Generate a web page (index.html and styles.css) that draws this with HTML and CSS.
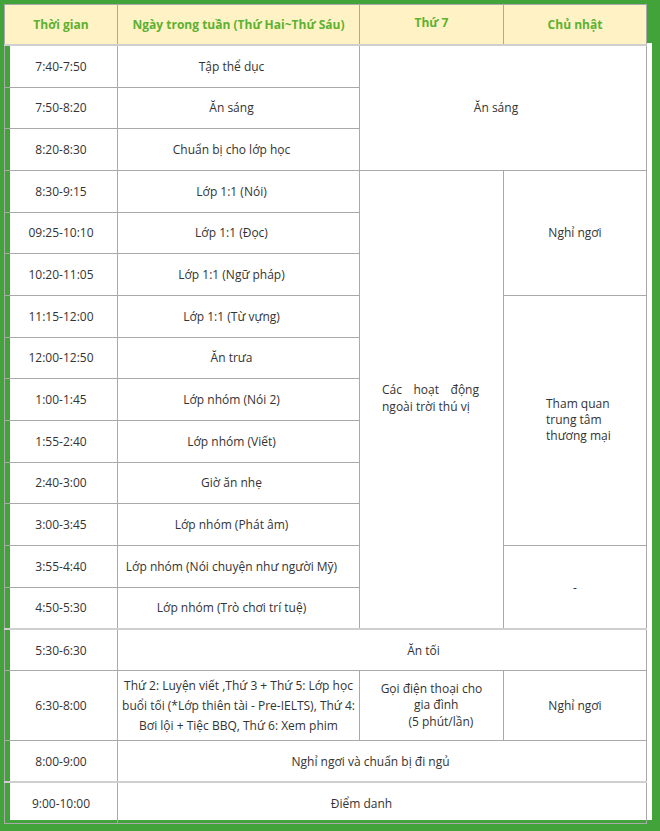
FILE: index.html
```html
<!DOCTYPE html>
<html lang="vi">
<head>
<meta charset="utf-8">
<title>Thời gian biểu</title>
<link rel="stylesheet" href="styles.css">
</head>
<body>
<div class="frame">
<table class="schedule">
<colgroup><col class="c-time"><col class="c-week"><col class="c-sat"><col class="c-sun"></colgroup>
<thead>
<tr><th>Thời gian</th><th>Ngày trong tuần (Thứ Hai~Thứ Sáu)</th><th><span class="lift">Thứ 7</span></th><th>Chủ nhật</th></tr>
</thead>
<tbody>
<tr><td>7:40-7:50</td><td class="wk">Tập thể dục</td><td class="wk" colspan="2" rowspan="3">Ăn sáng</td></tr>
<tr><td>7:50-8:20</td><td class="wk">Ăn sáng</td></tr>
<tr><td>8:20-8:30</td><td class="wk">Chuẩn bị cho lớp học</td></tr>
<tr><td>8:30-9:15</td><td class="wk">Lớp 1:1 (Nói)</td><td rowspan="11" class="outdoor">Các hoạt động ngoài trời thú vị</td><td rowspan="3">Nghỉ ngơi</td></tr>
<tr><td>09:25-10:10</td><td class="wk">Lớp 1:1 (Đọc)</td></tr>
<tr><td>10:20-11:05</td><td class="wk">Lớp 1:1 (Ngữ pháp)</td></tr>
<tr><td>11:15-12:00</td><td class="wk">Lớp 1:1 (Từ vựng)</td><td rowspan="6" class="mall">Tham quan trung tâm thương mại</td></tr>
<tr><td>12:00-12:50</td><td class="wk">Ăn trưa</td></tr>
<tr><td>1:00-1:45</td><td class="wk">Lớp nhóm (Nói 2)</td></tr>
<tr><td>1:55-2:40</td><td class="wk">Lớp nhóm (Viết)</td></tr>
<tr><td>2:40-3:00</td><td class="wk">Giờ ăn nhẹ</td></tr>
<tr><td>3:00-3:45</td><td class="wk">Lớp nhóm (Phát âm)</td></tr>
<tr><td>3:55-4:40</td><td class="wk">Lớp nhóm (Nói chuyện như người Mỹ)</td><td rowspan="2">-</td></tr>
<tr><td>4:50-5:30</td><td class="wk">Lớp nhóm (Trò chơi trí tuệ)</td></tr>
<tr class="sep"><td>5:30-6:30</td><td colspan="3" class="dinner">Ăn tối</td></tr>
<tr class="tall"><td>6:30-8:00</td><td class="evening">Thứ 2: Luyện viết ,Thứ 3 + Thứ 5: Lớp học<br>buổi tối (*Lớp thiên tài - Pre-IELTS), Thứ 4:<br>Bơi lội + Tiệc BBQ, Thứ 6: Xem phim</td><td class="call">Gọi điện thoại cho<br>&nbsp;&nbsp;&nbsp;gia đình<br>&nbsp;&nbsp;&nbsp;&nbsp;&nbsp;&nbsp;(5 phút/lần)</td><td>Nghỉ ngơi</td></tr>
<tr class="short"><td>8:00-9:00</td><td colspan="3" class="sleep">Nghỉ ngơi và chuẩn bị đi ngủ</td></tr>
<tr class="sep"><td>9:00-10:00</td><td colspan="3" class="roll">Điểm danh</td></tr>
</tbody>
</table>
</div>
</body>
</html>
```

FILE: styles.css
```css
html, body {
  margin: 0;
  padding: 0;
}

body {
  background: #43a33b;
  font-family: "Open Sans", "Noto Sans", "DejaVu Sans", sans-serif;
}

.frame {
  box-sizing: border-box;
  height: 831px;
  padding: 4px;
  background: linear-gradient(#ffffff, #ffffff) 10px 43px / 642px 777px no-repeat;
}

.schedule {
  border-collapse: collapse;
  table-layout: fixed;
  width: 642px;
  font-size: 12px;
  line-height: 17px;
  color: #333333;
}

.c-time { width: 113px; }
.c-week { width: 242px; }
.c-sat { width: 144px; }
.c-sun { width: 143px; }

.schedule th {
  height: 39px;
  padding: 0 4px;
  background: #fff2c4;
  color: #5cb132;
  font-weight: 700;
  border: 1px solid #a9a9a9;
  border-bottom: 2px solid #cfcfcf;
  text-align: center;
  vertical-align: middle;
}

.lift {
  position: relative;
  top: -2px;
}

.schedule td {
  height: 40.67px;
  padding: 0 4px;
  border: 1px solid #a9a9a9;
  text-align: center;
  vertical-align: middle;
  background: transparent;
}

.schedule td.wk {
  padding: 0 16px 0 2px;
}

.schedule td.outdoor {
  padding: 0 24px 4px 22px;
  text-align: justify;
}

.schedule td.mall {
  padding: 0 28px 0 42px;
  text-align: left;
  line-height: 16px;
}

.schedule tr.sep td {
  height: 39.67px;
  border-top: 2px solid #cfcfcf;
}

.schedule tr.tall td {
  height: 69.5px;
}

.schedule tr.short td {
  height: 40px;
}

.schedule td.evening {
  padding: 0 2px;
  line-height: 20px;
}

.schedule td.call {
  line-height: 16.5px;
}

.schedule td.dinner {
  padding: 0 0 0 83px;
}

.schedule td.sleep {
  padding: 0 23px 0 0;
}

.schedule td.roll {
  padding: 0 41px 0 0;
}
```
